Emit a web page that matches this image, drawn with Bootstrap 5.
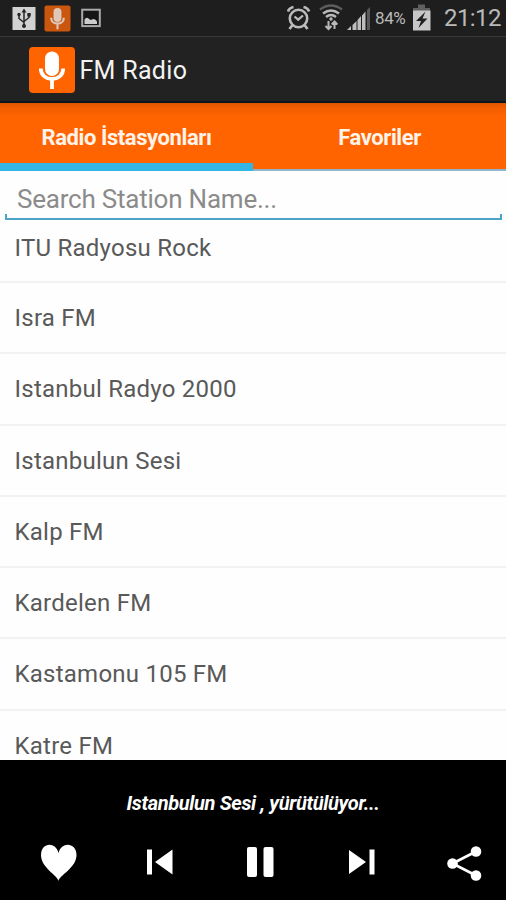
<!DOCTYPE html>
<html lang="tr">
<head>
<meta charset="utf-8">
<meta name="viewport" content="width=device-width, initial-scale=1">
<title>FM Radio</title>
<link href="https://cdn.jsdelivr.net/npm/bootstrap@5.3.0/dist/css/bootstrap.min.css" rel="stylesheet">
<style>
body{font-family:Roboto,"Liberation Sans",sans-serif;background:#fefefe}
svg{display:block;flex:none}
.app-screen{height:900px;width:506px}
.status-strip{height:36px;background:#1e1e1e;color:#b9b9b9;padding:0 6px 0 12px}
.status-pct{font-size:17px;line-height:36px;width:30px;margin:0 7px 0 4px;letter-spacing:-.4px}
.status-clock{font-size:24px;line-height:36px;width:56px;margin-left:12px;letter-spacing:-.6px}
.gap-pic{margin-left:10px}
.gap-wifi{margin-left:8px}
.tint-mic{color:#ddc8ba}
.title-strip{height:67px;background:#222;border-top:1px solid #3a3a3a;border-bottom:2px solid #08161d;padding:2px 0 0 28.500px;color:#f3f3f3;font-size:25px}
.title-text{margin:2px 0 0 5px;letter-spacing:.3px}
.tint-title{color:#fff}
.tab-strip{height:68px;background:linear-gradient(#dd5500,#f25d00 5px,#ff6400 14px)}
.tab-strip .nav-link{height:68px;padding:2px 0 0;border-radius:0;border-bottom:2px solid #8fb4cc;color:#fff3ea;font-size:22px;font-weight:700;line-height:66px;letter-spacing:-.42px}
.tab-strip .nav-link.active{border-bottom:8px solid #33b5e5}
.search-wrap{height:50px;padding:0 4px 0 5px}
.search-wrap .form-control{height:50px;border:0;border-radius:0;background:transparent;padding:5px 12px 0;font-size:26px;color:#444;box-shadow:none;letter-spacing:-.22px}
.search-wrap .form-control::placeholder{color:#8b8b8b;opacity:1}
.search-edge{height:6px;margin-top:-7px;border:2px solid #4ba3c7;border-top:0}
.station-list{height:539px}
.station-list .list-group-item{height:71.25px;flex:none;border:0;border-bottom:2px solid #f2f2f2;background:transparent;padding:0 14px 0 14.500px;line-height:71px;font-size:24px;color:#595959;letter-spacing:.24px}
.station-list .list-group-item:first-child{height:62px;line-height:54px}
.player{height:140px;background:#000;color:#fff}
.now-playing{height:73px;padding-top:28px;font-size:20px;line-height:30px;font-weight:700;font-style:italic;letter-spacing:-.35px}
</style>
<script src="https://cdn.jsdelivr.net/npm/bootstrap@5.3.0/dist/js/bootstrap.bundle.min.js"></script>
</head>
<body>
<svg width="0" height="0" class="d-none"><defs>
<symbol id="mic" viewBox="0 0 46 46"><rect x="16" y="4.500" width="14" height="24.500" rx="7" fill="currentColor"/><path d="M11.800 21.500C11.800 35.500 34.200 35.500 34.200 21.500M23 32v10" fill="none" stroke="currentColor" stroke-width="3.800"/></symbol>
</defs></svg>
<div class="app-screen d-flex flex-column overflow-hidden">
<header>
<div class="status-strip d-flex align-items-center justify-content-between">
<div class="d-flex align-items-center">
<svg width="24" height="36"><rect x=".5" y="7" width="23" height="23" fill="#d2d2d2"/><g stroke="#252525" stroke-width="1.5" fill="none"><path d="M12 10.5V26M7 14v4.5l5 4M17 14v3.5l-5 4"/></g><path d="M12 8.5l2.5 4h-5z" fill="#252525"/><circle cx="12" cy="26" r="2" fill="#252525"/><circle cx="7" cy="14.5" r="1.7" fill="#252525"/><path d="M15.3 13h3.4v3.4h-3.4z" fill="#252525"/></svg>
<svg width="27" height="36" class="tint-mic ms-2"><rect x=".5" y="5.5" width="26" height="26" rx="2" fill="#cb560e"/><use href="#mic" x=".5" y="5.5" width="26" height="26"/></svg>
<svg width="21" height="36" class="gap-pic"><rect x="1.2" y="9.7" width="17.6" height="16.4" fill="#161616" stroke="#aaa" stroke-width="2"/><path d="M3.5 24v-4.500q2-3 4-1l2 1.500 3-1q2-.2 3.500 2.500V24z" fill="#ccc"/></svg>
</div>
<div class="d-flex align-items-center">
<svg width="24" height="36" fill="none" stroke="#bbb"><circle cx="11.5" cy="18.5" r="8.7" stroke-width="2.6"/><path d="M7.5 16.5l3.7 3.2 4.800-4.200" stroke-width="2.200"/><path d="M1 11.5Q2 8 6.500 7M22 11.5Q21 8 16.500 7M5.500 25l-3 4M17.500 25l3 4" stroke-width="2.800"/></svg>
<svg width="24" height="36" class="gap-wifi" fill="none" stroke="#b9b9b9"><path d="M1 9.500Q12 1.500 23 9.500" stroke="#5d5d5d" stroke-width="2.400"/><path d="M4 13.500Q12 7.500 20 13.500M7 17Q12 13 17 17" stroke-width="2.500"/><circle cx="12" cy="19" r="1.700" fill="#b9b9b9" stroke="none"/><path d="M9.500 21v7.500M6.500 26l3 3 3-3M15.500 29v-7M12.700 24.500l2.800-3 2.800 3" stroke-width="2"/></svg>
<svg width="24" height="36" class="ms-1" fill="#bdbdbd"><path d="M0 30l4-4v4zM5.500 25l4-4v9h-4zM10.500 20l3.500-4v14h-3.500zM15 15.500l3.500-4V30H15z"/><path d="M20 10l3-3v23h-3z" fill="#5a5a5a"/></svg>
<div class="status-pct text-nowrap">84%</div>
<svg width="20" height="36"><path d="M6 4.500h7V8h5v4H1V8h5z" fill="#5f5f5f"/><path d="M1 10.500h17.500v20H1z" fill="#c7c7c7"/><path d="M13.500 11.500l-9.500 9.500h5l-2.500 7 9-9.500h-5z" fill="#202020"/></svg>
<div class="status-clock text-nowrap">21:12</div>
</div>
</div>
<div class="title-strip d-flex align-items-center">
<svg width="46" height="46" class="tint-title"><rect width="46" height="46" rx="4" fill="#ff6400"/><use href="#mic" width="46" height="46"/></svg>
<span class="title-text">FM Radio</span>
</div>
</header>
<nav class="tab-strip nav nav-fill flex-nowrap">
<a class="nav-link active w-50" href="#stations"><span>Radio İstasyonları</span></a>
<a class="nav-link w-50" href="#favorites"><span>Favoriler</span></a>
</nav>
<div class="search-wrap">
<input class="form-control" type="text" placeholder="Search Station Name..." aria-label="Search Station Name">
<div class="search-edge"></div>
</div>
<div class="station-list list-group list-group-flush overflow-hidden" id="stations">
<div class="list-group-item">ITU Radyosu Rock</div>
<div class="list-group-item">Isra FM</div>
<div class="list-group-item">Istanbul Radyo 2000</div>
<div class="list-group-item">Istanbulun Sesi</div>
<div class="list-group-item">Kalp FM</div>
<div class="list-group-item">Kardelen FM</div>
<div class="list-group-item">Kastamonu 105 FM</div>
<div class="list-group-item">Katre FM</div>
</div>
<footer class="player">
<div class="now-playing text-center"><span>Istanbulun Sesi , yürütülüyor...</span></div>
<div class="d-flex justify-content-between px-2">
<svg width="101" height="60" fill="#fff"><path d="M50.500 48C49.500 42 33 35 33 22 33 9.500 47.500 8 50.500 20 53.500 8 68.500 9.500 68.500 22 68.500 35 51.500 42 50.500 48z"/></svg>
<svg width="98" height="60" fill="#fff"><path d="M38 16.500h5v25h-5zM63.500 16.500v25L46 29z"/></svg>
<svg width="98" height="60" fill="#fff"><rect x="40" y="14" width="10" height="30" rx="2"/><rect x="56.500" y="14" width="10" height="30" rx="2"/></svg>
<svg width="98" height="60" fill="#fff"><path d="M44 17l17 12-17 12zM64.500 16.500h5v25h-5z"/></svg>
<svg width="95" height="60" fill="#fff"><path d="M73 18.500L49.500 30.500 73 42.500" fill="none" stroke="#fff" stroke-width="2.700"/><circle cx="49.500" cy="30.500" r="5.300"/><circle cx="73" cy="18.500" r="5.300"/><circle cx="73" cy="42.500" r="5.300"/></svg>
</div>
</footer>
</div>
</body>
</html>
